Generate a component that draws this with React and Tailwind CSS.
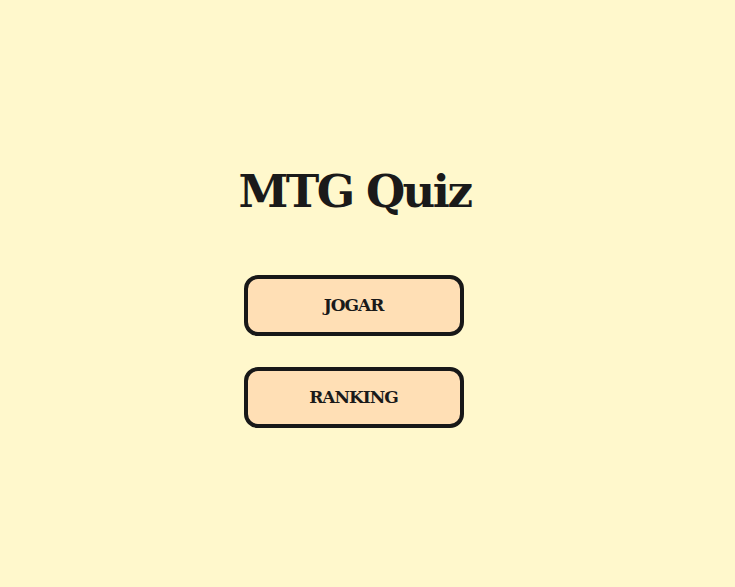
export default function App() {
  return (
    <div className="min-h-screen w-full bg-[#fff8cc] flex flex-col items-center pt-[162px] pr-[28px] font-['DejaVu_Serif',serif]">
      <h1 className="text-[45px] leading-[60px] font-bold text-[#1a1a1a] tracking-[-2.5px] pl-[2px]">MTG Quiz</h1>
      <div className="mt-[53px] flex flex-col gap-[31px]">
        <button className="w-[220px] h-[61px] rounded-[14px] border-4 border-[#181818] bg-[#ffdfb5] text-[17px] font-bold text-[#1a1a1a] tracking-[-1px]">JOGAR</button>
        <button className="w-[220px] h-[61px] rounded-[14px] border-4 border-[#181818] bg-[#ffdfb5] text-[17px] font-bold text-[#1a1a1a] tracking-[-1px]">RANKING</button>
      </div>
    </div>
  );
}
